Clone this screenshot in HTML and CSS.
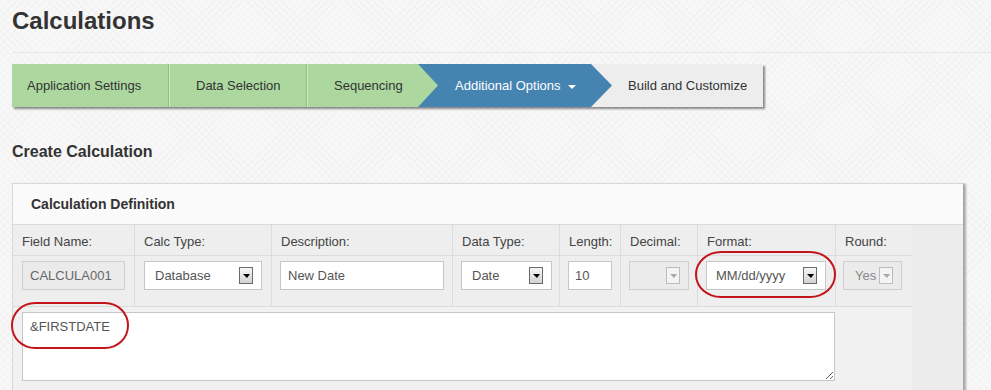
FILE: index.html
```html
<!DOCTYPE html>
<html lang="en">
<head>
    <meta charset="UTF-8">
    <meta name="viewport" content="width=device-width, initial-scale=1.0">
    <title>Calculations</title>
    <link rel="stylesheet" href="styles.css">
</head>
<body>
    <div class="page">
        <header class="page-header">
            <h1>Calculations</h1>
        </header>

        <nav class="wizard">
            <div class="step done step-1">Application Settings</div>
            <div class="step done step-2">Data Selection</div>
            <div class="step done step-3">Sequencing</div>
            <div class="step current">Additional Options<span class="caret"></span></div>
            <div class="step todo">Build and Customize</div>
        </nav>

        <h2>Create Calculation</h2>

        <div class="panel">
            <div class="panel-heading">Calculation Definition</div>
            <div class="panel-body">
                <div class="calc-grid">
                    <div class="cell head">Field Name:</div>
                    <div class="cell head">Calc Type:</div>
                    <div class="cell head">Description:</div>
                    <div class="cell head">Data Type:</div>
                    <div class="cell head">Length:</div>
                    <div class="cell head">Decimal:</div>
                    <div class="cell head">Format:</div>
                    <div class="cell head end">Round:</div>

                    <div class="cell entry">
                        <input class="field field-name" type="text" value="CALCULA001" disabled>
                    </div>
                    <div class="cell entry">
                        <div class="combo combo-calc"><span>Database</span><span class="drop"></span></div>
                    </div>
                    <div class="cell entry">
                        <input class="field field-desc" type="text" value="New Date">
                    </div>
                    <div class="cell entry">
                        <div class="combo combo-type"><span>Date</span><span class="drop"></span></div>
                    </div>
                    <div class="cell entry">
                        <input class="field field-length" type="text" value="10">
                    </div>
                    <div class="cell entry">
                        <div class="combo combo-decimal off"><span></span><span class="drop"></span></div>
                    </div>
                    <div class="cell entry">
                        <div class="combo combo-format"><span>MM/dd/yyyy</span><span class="drop"></span></div>
                        <span class="mark mark-format"></span>
                    </div>
                    <div class="cell entry end">
                        <div class="combo combo-round off"><span>Yes</span><span class="drop"></span></div>
                    </div>

                    <div class="cell expr">
                        <textarea class="expr-input">&amp;FIRSTDATE</textarea>
                        <span class="mark mark-expr"></span>
                    </div>
                </div>
            </div>
        </div>
    </div>
</body>
</html>
```

FILE: styles.css
```css
/* Calculations wizard page */
body {
    margin: 0;
    font-family: Arial, "Liberation Sans", sans-serif;
    font-size: 13px;
    color: #333;
    background-color: #f8f8f8;
    background-image:
        repeating-linear-gradient(45deg, #f2f2f2 0 1px, transparent 1px 5px),
        repeating-linear-gradient(-45deg, #f2f2f2 0 1px, transparent 1px 5px);
    overflow: hidden;
}

.page {
    padding-left: 12px;
}

.page-header {
    padding: 7px 0 17px;
    border-bottom: 1px solid #e6e6e6;
}

h1 {
    margin: 0;
    font-size: 24px;
    line-height: 28px;
    font-weight: bold;
    color: #333;
}

/* Wizard steps */
.wizard {
    display: flex;
    width: 751px;
    height: 43px;
    margin-top: 11px;
    background-color: #ededed;
    box-shadow: 2px 2px 2px rgba(0, 0, 0, 0.45);
    line-height: 44px;
}

.step {
    position: relative;
    box-sizing: border-box;
    white-space: nowrap;
}

.step.done {
    background-color: #acd8a0;
    color: #333;
}

.step-1 {
    width: 157px;
    padding-left: 15px;
    border-right: 1px solid #8fbf83;
}

.step-2 {
    width: 138px;
    padding-left: 27px;
    border-right: 1px solid #8fbf83;
    box-shadow: inset 1px 0 0 #cdebc4;
}

.step-3 {
    width: 111px;
    padding-left: 27px;
    box-shadow: inset 1px 0 0 #cdebc4;
    z-index: 2;
}

.step-3::after,
.current::after {
    content: '';
    position: absolute;
    top: 0;
    right: -20px;
    width: 20px;
    height: 100%;
    background-color: inherit;
    clip-path: polygon(0 0, 100% 50%, 0 100%);
}

.current {
    width: 173px;
    padding-left: 37px;
    background-color: #4584b1;
    color: #fff;
    z-index: 1;
}

.current::after {
    right: -21px;
    width: 21px;
}

.caret {
    display: inline-block;
    margin-left: 7px;
    vertical-align: middle;
    border-top: 4px solid #fff;
    border-left: 4px solid transparent;
    border-right: 4px solid transparent;
}

.todo {
    flex: 1;
    padding-left: 37px;
    color: #333;
}

h2 {
    margin: 35px 0 0;
    font-size: 16px;
    line-height: 20px;
    font-weight: bold;
    color: #333;
}

/* Panel */
.panel {
    width: 952px;
    margin-top: 21px;
    box-sizing: border-box;
    border: 1px solid #d8d8d8;
    border-right-color: #a5a5a5;
    border-bottom: 0;
    box-shadow: 2px 1px 2px rgba(0, 0, 0, 0.3);
    background-color: #ececec;
}

.panel-heading {
    height: 40px;
    line-height: 40px;
    padding-left: 18px;
    background-color: #fafafa;
    border-bottom: 1px solid #dadada;
    font-size: 14px;
    font-weight: bold;
    color: #333;
}

.panel-body {
    padding-bottom: 20px;
}

.calc-grid {
    display: grid;
    grid-template-columns: 122px 137px 181px 107px 61px 77px 138px 76px;
    width: 899px;
    background-color: #eeeeee;
}

.cell {
    position: relative;
    box-sizing: border-box;
    border-right: 1px solid #dcdcdc;
    border-bottom: 1px solid #dcdcdc;
}

.cell.end {
    border-right: 0;
}

.head {
    padding: 9px 0 6px 9px;
    line-height: 15px;
    color: #444;
}

.entry {
    padding: 5px 0 16px 8px;
}

/* Inputs */
.field {
    display: block;
    box-sizing: border-box;
    height: 29px;
    padding: 0 7px;
    border: 1px solid #c6c6c6;
    background-color: #fff;
    font-family: Arial, "Liberation Sans", sans-serif;
    font-size: 13px;
    color: #555;
}

.field-name {
    width: 103px;
    margin-left: 1px;
    background-color: #ebebeb;
    border-color: #cfcfcf;
    color: #666;
}

.field-desc {
    width: 164px;
}

.field-length {
    width: 44px;
    padding-left: 6px;
}

.combo {
    display: flex;
    align-items: center;
    justify-content: space-between;
    box-sizing: border-box;
    height: 29px;
    padding: 0 8px 0 10px;
    border: 1px solid #c6c6c6;
    background-color: #fff;
    color: #555;
    overflow: hidden;
    white-space: nowrap;
}

.combo.off {
    background-color: #ebebeb;
    border-color: #cfcfcf;
    color: #888;
}

.combo-calc {
    width: 118px;
    margin-left: 1px;
}

.combo-type {
    width: 91px;
}

.combo-decimal {
    width: 60px;
}

.combo-format {
    width: 120px;
    padding-left: 9px;
}

.combo-round {
    width: 59px;
    margin-left: -1px;
    padding-left: 11px;
}

.drop {
    display: flex;
    align-items: center;
    justify-content: center;
    flex: none;
    box-sizing: border-box;
    width: 14px;
    height: 17px;
    border: 1px solid #6a6a6a;
    background: linear-gradient(#f6f6f6, #d2d2d2);
}

.drop::after {
    content: '';
    border-top: 4px solid #000;
    border-left: 4px solid transparent;
    border-right: 3px solid transparent;
}

.off .drop {
    border-color: #bdbdbd;
    background: #f4f4f4;
}

.off .drop::after {
    border-top-color: #a8a8a8;
}

/* Expression row */
.expr {
    grid-column: 1 / -1;
    padding: 5px 0 12px 9px;
    border-right: 0;
    border-bottom: 0;
    background-color: #f1f1f1;
}

.expr-input {
    display: block;
    box-sizing: border-box;
    width: 813px;
    height: 69px;
    padding: 6px 7px;
    border: 1px solid #c6c6c6;
    background-color: #fff;
    font-family: Arial, "Liberation Sans", sans-serif;
    font-size: 13px;
    line-height: 15px;
    color: #555;
}

/* Red annotation rings */
.mark {
    position: absolute;
    z-index: 3;
    box-sizing: border-box;
    border: 2px solid #c3161c;
    pointer-events: none;
}

.mark-format {
    left: -3px;
    top: -5px;
    width: 141px;
    height: 47px;
    border-radius: 26px / 23px;
}

.mark-expr {
    left: -2px;
    top: -5px;
    width: 118px;
    height: 47px;
    border-radius: 24px / 23px;
}
```
